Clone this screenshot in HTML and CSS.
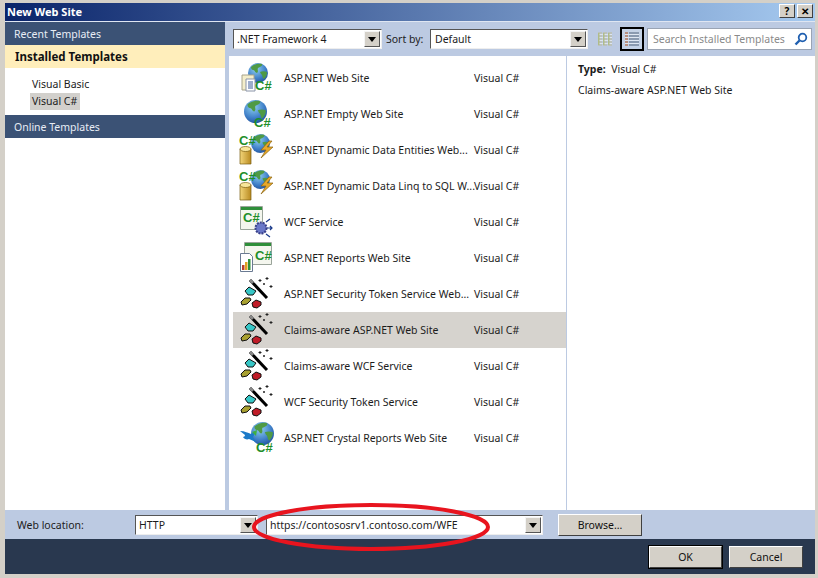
FILE: index.html
```html
<!DOCTYPE html>
<html lang="en">
<head>
<meta charset="utf-8">
<title>New Web Site</title>
<link rel="stylesheet" href="styles.css">
</head>
<body>
<svg class="defs" width="0" height="0" aria-hidden="true">
  <defs>
    <radialGradient id="gl" cx="0.4" cy="0.3" r="0.8"><stop offset="0" stop-color="#8fd0f0"/><stop offset="0.6" stop-color="#3f7fc8"/><stop offset="1" stop-color="#1c4a94"/></radialGradient>
    <linearGradient id="db" x1="0" x2="1"><stop offset="0" stop-color="#f3d67a"/><stop offset="1" stop-color="#b98a20"/></linearGradient>
    <symbol id="globe" viewBox="0 0 20 20">
      <circle cx="10" cy="10" r="10" fill="url(#gl)"/>
      <path d="M3 4c3-3 8-4 11-3 1 2-2 3-4 4-1 2 1 3-1 5-2 0-2-3-4-3-1 0-2-1-2-3zM12 9c2-1 5-1 7 0 0 3-1 5-3 7-2-1-1-4-3-5z" fill="#4f9a45"/>
    </symbol>
    <symbol id="wizard" viewBox="0 0 36 36">
      <path d="M12 4 29 22" stroke="#000" stroke-width="3"/>
      <path d="M12 4l3 3" stroke="#888" stroke-width="3"/>
      <path d="M22 3v3M20.500 4.500h3M29 1v3M27.500 2.500h3M33 9v3M31.500 10.500h3M26 7v2M25 8h2" stroke="#222" stroke-width="1"/>
      <path d="M7 15l4-4 7 4-3 4-5 0z" fill="#36c6c6" stroke="#111"/>
      <path d="M3 26l4-4 5 0 1 2-4 4-5 1z" fill="#a8a030" stroke="#111"/>
      <path d="M14 27l4-3 5 2 0 3-4 3-4-1z" fill="#c01c28" stroke="#111"/>
    </symbol>
    <symbol id="data" viewBox="0 0 36 36">
      <use href="#globe" x="13" y="2" width="19" height="19"/>
      <path d="M31 9 23 18h5l-5 8 12-11h-6l5-6z" fill="#e8a828" stroke="#8a6414" stroke-width="0.700"/>
      <text x="1" y="13" class="cs">C#</text>
      <path d="M2 17h11v15H2z" fill="url(#db)" stroke="#7a5c10" stroke-width="0.700"/>
      <ellipse cx="7.500" cy="17" rx="5.500" ry="2.500" fill="#f8e69a" stroke="#7a5c10" stroke-width="0.700"/>
    </symbol>
  </defs>
</svg>

<div class="window">
  <header class="titlebar">
    <span class="title">New Web Site</span>
    <span class="capbtns"><span class="capbtn">?</span><span class="capbtn">✕</span></span>
  </header>

  <div class="body">
    <nav class="side">
      <div class="side-head">Recent Templates</div>
      <div class="side-head side-head-active">Installed Templates</div>
      <div class="tree">
        <div class="tree-item">Visual Basic</div>
        <div class="tree-item tree-item-selected">Visual C#</div>
      </div>
      <div class="side-head">Online Templates</div>
    </nav>

    <main class="content">
      <div class="toolbar">
        <div class="combo combo-fw"><span class="combo-text">.NET Framework 4</span><span class="combo-btn"></span></div>
        <span class="sort-label">Sort by:</span>
        <div class="combo combo-sort"><span class="combo-text">Default</span><span class="combo-btn"></span></div>
        <span class="view-btn">
          <svg width="14" height="16" viewBox="0 0 14 16"><path d="M0 1h4v14H0zM5 1h4v14H5zM10 1h4v14h-4z" fill="#bcc2bc"/><path d="M0 3.500h14M0 6.500h14M0 9.500h14M0 12.500h14" stroke="#dce4f0"/><path d="M0 2h1.500v12H0zM5 2h1.500v12H5zM10 2h1.500v12H10z" fill="#b0bc88"/></svg>
        </span>
        <span class="view-btn view-btn-active">
          <svg width="14" height="16" viewBox="0 0 14 16"><path d="M0 1h3v14H0z" fill="#b89080"/><path d="M4 1h10v14H4z" fill="#8a9ab0"/><path d="M0 3.500h14M0 6.500h14M0 9.500h14M0 12.500h14" stroke="#dfe7f2"/></svg>
        </span>
        <div class="search"><span class="search-text">Search Installed Templates</span>
          <svg width="14" height="14" viewBox="0 0 14 14"><circle cx="8.500" cy="5.500" r="3.800" fill="none" stroke="#1f5fb0" stroke-width="1.800"/><path d="M5.500 8.500 1.500 12.500" stroke="#1f5fb0" stroke-width="2.400"/></svg>
        </div>
      </div>

      <div class="panes">
        <div class="list">
          <div class="row">
            <svg class="ico" viewBox="0 0 36 36"><use href="#globe" x="10" y="3" width="20" height="20"/><path d="M4 15h12v15H4z" fill="#f4eecb" stroke="#a8a48c"/><path d="M8 19h9v12H8z" fill="#fff" stroke="#8a94a8"/><path d="M10 22h5M10 24h5M10 26h5M10 28h5" stroke="#3a5a9a"/><text x="17" y="30" class="cs">C#</text></svg>
            <span class="name">ASP.NET Web Site</span><span class="lang">Visual C#</span>
          </div>
          <div class="row">
            <svg class="ico" viewBox="0 0 36 36"><use href="#globe" x="6" y="4" width="23" height="23"/><text x="16" y="31" class="cs">C#</text></svg>
            <span class="name">ASP.NET Empty Web Site</span><span class="lang">Visual C#</span>
          </div>
          <div class="row">
            <svg class="ico" viewBox="0 0 36 36"><use href="#data"/></svg>
            <span class="name">ASP.NET Dynamic Data Entities Web...</span><span class="lang">Visual C#</span>
          </div>
          <div class="row">
            <svg class="ico" viewBox="0 0 36 36"><use href="#data"/></svg>
            <span class="name">ASP.NET Dynamic Data Linq to SQL W...</span><span class="lang">Visual C#</span>
          </div>
          <div class="row">
            <svg class="ico" viewBox="0 0 36 36"><path d="M2.500 2.500h22v23h-22z" fill="#f4f6ee" stroke="#9aa49a"/><path d="M3 3h21v3H3z" fill="#2f8f3a"/><text x="5" y="18" class="cs">C#</text><circle cx="23" cy="24" r="5.500" fill="#6a78c8" stroke="#39408a" stroke-width="2" stroke-dasharray="2 1"/><path d="M29 24h5M32 22l2 2-2 2M28 18l4-3M28 30l4 3" stroke="#1a3a8a" stroke-width="1.200" fill="none"/></svg>
            <span class="name">WCF Service</span><span class="lang">Visual C#</span>
          </div>
          <div class="row">
            <svg class="ico" viewBox="0 0 36 36"><path d="M6.500 2.500h27v22h-27z" fill="#f4f6ee" stroke="#9aa49a"/><path d="M7 3h26v3H7z" fill="#2f8f3a"/><text x="17" y="20" class="cs">C#</text><path d="M2.500 13.500h9l3 3v15h-12z" fill="#fff" stroke="#6a7a92"/><path d="M4 30v-5h2.500v5z" fill="#b8402c"/><path d="M7 30v-8h2.500v8z" fill="#e0a020"/><path d="M10 30v-11h2.500v11z" fill="#2f8f3a"/></svg>
            <span class="name">ASP.NET Reports Web Site</span><span class="lang">Visual C#</span>
          </div>
          <div class="row">
            <svg class="ico" viewBox="0 0 36 36"><use href="#wizard"/></svg>
            <span class="name">ASP.NET Security Token Service Web...</span><span class="lang">Visual C#</span>
          </div>
          <div class="row row-selected">
            <svg class="ico" viewBox="0 0 36 36"><use href="#wizard"/></svg>
            <span class="name">Claims-aware ASP.NET Web Site</span><span class="lang">Visual C#</span>
          </div>
          <div class="row">
            <svg class="ico" viewBox="0 0 36 36"><use href="#wizard"/></svg>
            <span class="name">Claims-aware WCF Service</span><span class="lang">Visual C#</span>
          </div>
          <div class="row">
            <svg class="ico" viewBox="0 0 36 36"><use href="#wizard"/></svg>
            <span class="name">WCF Security Token Service</span><span class="lang">Visual C#</span>
          </div>
          <div class="row">
            <svg class="ico" viewBox="0 0 36 36"><use href="#globe" x="13" y="2" width="23" height="23"/><path d="M2 11c5 0 8 2 11 3l5-3-3 6 3 5-7-3c-2 1-5 0-6-2 1 0 2-1 2-2z" fill="#1c7ac8"/><path d="M14 12l5-2-1 6z" fill="#40b040"/><text x="18" y="32" class="cs">C#</text></svg>
            <span class="name">ASP.NET Crystal Reports Web Site</span><span class="lang">Visual C#</span>
          </div>
        </div>
        <aside class="detail">
          <div class="detail-type"><b>Type:</b>&nbsp; Visual C#</div>
          <div class="detail-desc">Claims-aware ASP.NET Web Site</div>
        </aside>
      </div>
    </main>
  </div>

  <div class="locbar">
    <span class="loc-label">Web location:</span>
    <div class="combo combo-http"><span class="combo-text">HTTP</span><span class="combo-btn"></span></div>
    <div class="combo combo-url"><span class="combo-text">https://contososrv1.contoso.com/WFE</span><span class="combo-btn"></span></div>
    <span class="btn btn-browse">Browse...</span>
  </div>

  <footer class="footer">
    <span class="btn btn-ok">OK</span>
    <span class="btn btn-cancel">Cancel</span>
  </footer>
</div>

<svg class="annotation" width="260" height="66" viewBox="0 0 260 66" aria-hidden="true"><ellipse cx="130" cy="33" rx="117" ry="22" fill="none" stroke="#e8141e" stroke-width="4"/></svg>
</body>
</html>
```

FILE: styles.css
```css
* { box-sizing: border-box; }
html, body { margin: 0; padding: 0; }
body {
  width: 818px;
  height: 578px;
  position: relative;
  overflow: hidden;
  background: #d4d0c8;
  font-family: "Noto Sans", "Liberation Sans", sans-serif;
  font-size: 10.5px;
  color: #1c1c1c;
}
.defs { position: absolute; }
.window {
  height: 578px;
  padding: 3px 3px 4px 5px;
  display: flex;
  flex-direction: column;
}
.titlebar {
  height: 19px;
  flex: none;
  display: flex;
  align-items: center;
  justify-content: space-between;
  padding: 0 2px 2px 2px;
  background: linear-gradient(90deg, #0a246a, #a6caf0);
  border-bottom: 1px solid #dfe6f2;
}
.title { color: #fff; font-weight: 700; font-size: 11px; }
.capbtns { display: flex; gap: 2px; }
.capbtn {
  width: 16px;
  height: 14px;
  background: #d4d0c8;
  border: 1px solid;
  border-color: #fff #404040 #404040 #fff;
  color: #000;
  font-size: 10px;
  font-weight: 700;
  line-height: 12px;
  text-align: center;
}
.body {
  flex: 1;
  min-height: 0;
  display: flex;
  gap: 4px;
  background: #bccae2;
}
.side { width: 220px; flex: none; background: #fff; }
.side-head {
  height: 23px;
  padding-left: 9px;
  line-height: 24px;
  background: #3b5275;
  color: #e8edf5;
}
.side-head-active {
  background: #ffeebb;
  color: #111;
  font-weight: 700;
  font-size: 11.5px;
  padding-left: 10px;
}
.tree { height: 47px; padding: 8px 0 0 25px; }
.tree-item { height: 17px; line-height: 16px; padding-left: 2px; width: 50px; white-space: nowrap; }
.tree-item-selected { background: #d2d0cc; }
.content { flex: 1; min-width: 0; display: flex; flex-direction: column; }
.toolbar {
  height: 34px;
  flex: none;
  display: flex;
  align-items: center;
  padding: 0 4px;
}
.toolbar > * { flex: none; }
.combo {
  display: flex;
  align-items: center;
  justify-content: space-between;
  height: 20px;
  background: #fff;
  border: 1px solid;
  border-color: #555 #eee #eee #555;
  padding: 0 1px 1px 3px;
}
.combo-text { white-space: nowrap; }
.combo-btn {
  width: 16px;
  height: 16px;
  flex: none;
  position: relative;
  background: #d4d0c8;
  border: 1px solid;
  border-color: #f4f4f4 #555 #555 #f4f4f4;
}
.combo-btn::after {
  content: "";
  position: absolute;
  left: 3px;
  top: 5px;
  border: 4px solid transparent;
  border-top: 5px solid #000;
  border-bottom: 0;
}
.combo-fw { width: 149px; }
.sort-label { margin-left: 4px; width: 44px; white-space: nowrap; padding-bottom: 1px; }
.combo-sort { width: 158px; padding-left: 4px; }
.view-btn {
  width: 24px;
  height: 24px;
  margin-left: 5px;
  display: flex;
  align-items: center;
  justify-content: center;
  border: 2px solid transparent;
}
.view-btn-active { margin-left: 3px; border-color: #000; background: #c4d2e6; }
.search {
  width: 165px;
  height: 22px;
  margin-left: 3px;
  background: #fff;
  border: 1px solid #9aa4b4;
  display: flex;
  align-items: center;
  justify-content: space-between;
  padding: 0 3px 1px 5px;
  color: #8a8a8a;
}
.search-text { white-space: nowrap; }
.panes { flex: 1; min-height: 0; display: flex; background: #fff; }
.list {
  width: 338px;
  flex: none;
  padding: 4px 0 0 4px;
  border-right: 1px solid #bccae2;
}
.row {
  height: 36px;
  display: flex;
  align-items: center;
  padding-left: 5px;
  padding-bottom: 1px;
}
.row-selected { background: #d6d3ce; }
.ico { width: 36px; height: 36px; flex: none; margin-top: 1px; }
.name { margin-left: 10px; width: 190px; flex: none; white-space: nowrap; }
.lang { white-space: nowrap; }
.cs { font-family: "Liberation Sans", sans-serif; font-weight: 700; font-size: 13px; fill: #1f8f2a; }
.detail { flex: 1; padding: 6px 11px; }
.detail-type { height: 21px; line-height: 15px; }
.detail-desc { line-height: 15px; }
.locbar {
  height: 29px;
  flex: none;
  display: flex;
  align-items: center;
  background: #bccae2;
  padding-left: 12px;
}
.loc-label { width: 118px; flex: none; white-space: nowrap; }
.combo-http { width: 123px; margin-top: 1px; }
.combo-url { width: 277px; margin-left: 8px; margin-top: 1px; }
.btn {
  display: flex;
  align-items: center;
  justify-content: center;
  background: #d4d0c8;
  border: 1px solid;
  border-color: #fff #404040 #404040 #fff;
  color: #111;
}
.btn-browse { width: 84px; height: 22px; margin-left: 15px; }
.footer {
  height: 35px;
  flex: none;
  display: flex;
  align-items: center;
  justify-content: flex-end;
  gap: 7px;
  padding-right: 12px;
  background: #29384f;
}
.btn-ok { width: 73px; height: 22px; outline: 1px solid #000; }
.btn-cancel { width: 74px; height: 22px; }
.annotation { position: absolute; left: 241px; top: 494px; pointer-events: none; }
```
